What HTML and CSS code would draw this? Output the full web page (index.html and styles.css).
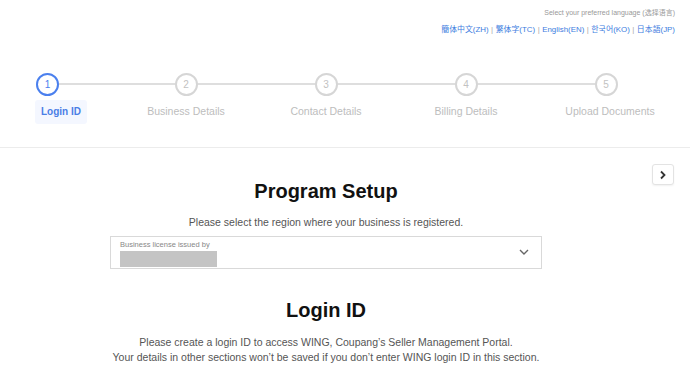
FILE: index.html
```html
<!DOCTYPE html>
<html lang="en">

<head>
    <meta charset="UTF-8">
    <meta name="viewport" content="width=device-width, initial-scale=1.0">
    <title>Seller Signup</title>
    <link rel="stylesheet" href="styles.css">
</head>

<body>
    <header class="lang-bar">
        <div class="lang-label">Select your preferred language (选择语言)</div>
        <div class="lang-links">
            <a href="#">簡体中文(ZH)</a><span class="sep">|</span><a href="#">繁体字(TC)</a><span class="sep">|</span><a href="#">English(EN)</a><span class="sep">|</span><a href="#">한국어(KO)</a><span class="sep">|</span><a href="#">日本語(JP)</a>
        </div>
    </header>

    <nav class="stepper">
        <div class="step step-first active">
            <div class="step-circle">1</div>
            <div class="step-label">Login ID</div>
        </div>
        <div class="step">
            <div class="step-circle">2</div>
            <div class="step-label">Business Details</div>
        </div>
        <div class="step">
            <div class="step-circle">3</div>
            <div class="step-label">Contact Details</div>
        </div>
        <div class="step">
            <div class="step-circle">4</div>
            <div class="step-label">Billing Details</div>
        </div>
        <div class="step step-last">
            <div class="step-circle">5</div>
            <div class="step-label">Upload Documents</div>
        </div>
    </nav>

    <div class="page">
        <main class="content">
            <h1 class="title">Program Setup</h1>
            <p class="subtitle">Please select the region where your business is registered.</p>

            <div class="select-box">
                <div class="select-text">
                    <div class="select-label">Business license issued by</div>
                    <div class="select-value"></div>
                </div>
                <svg class="select-arrow" width="10" height="6" viewBox="0 0 10 6">
                    <path d="M1 1 L5 5 L9 1" fill="none" stroke="#666" stroke-width="1.4" />
                </svg>
            </div>

            <h2 class="title section-title">Login ID</h2>
            <p class="desc">
                Please create a login ID to access WING, Coupang’s Seller Management Portal.<br>
                Your details in other sections won’t be saved if you don’t enter WING login ID in this section.
            </p>
        </main>

        <aside class="side">
            <button class="side-toggle" type="button">
                <svg width="8" height="10" viewBox="0 0 8 10">
                    <path d="M2 1.5 L5.5 5 L2 8.5" fill="none" stroke="#333" stroke-width="1.8" />
                </svg>
            </button>
        </aside>
    </div>
</body>

</html>
```

FILE: styles.css
```css
body {
    margin: 0;
    font-family: "Liberation Sans", Arial, "Noto Sans CJK SC", sans-serif;
    background: #fff;
    color: #222;
}

.lang-bar {
    display: flex;
    flex-direction: column;
    align-items: flex-end;
    gap: 6px;
    padding: 8px 15px 0 0;
}

.lang-label {
    font-size: 7px;
    line-height: 10px;
    color: #999;
}

.lang-links {
    display: flex;
    font-size: 7.9px;
    line-height: 12px;
    color: #3d7de0;
}

.lang-links a {
    color: #3d7de0;
    text-decoration: none;
}

.lang-links .sep {
    color: #aaa;
    margin: 0 2.5px;
}

.stepper {
    position: relative;
    display: flex;
    margin-top: 37px;
    padding: 0 14px 23px 36px;
    border-bottom: 1px solid #ececec;
}

.stepper::before {
    content: "";
    position: absolute;
    top: 10px;
    left: 47px;
    right: 84px;
    height: 2px;
    background: #dedede;
}

.step {
    position: relative;
    width: 140px;
    display: flex;
    flex-direction: column;
    align-items: center;
}

.step-first {
    width: 80px;
    align-items: flex-start;
}

.step-circle {
    width: 19px;
    height: 19px;
    border: 2px solid #d6d6d6;
    border-radius: 50%;
    background: #fff;
    color: #c2c2c2;
    font-size: 10px;
    line-height: 19px;
    text-align: center;
}

.step-label {
    margin-top: 4px;
    height: 24px;
    line-height: 23px;
    font-size: 10.5px;
    color: #bdbdbd;
    white-space: nowrap;
}

.step-last .step-label {
    margin-left: 8px;
}

.step.active .step-circle {
    border-color: #4b80ee;
    color: #4b80ee;
}

.step.active .step-label {
    margin-left: -1px;
    padding: 0 6px;
    background: #f4f7ff;
    border-radius: 3px;
    color: #4a7ee6;
    font-weight: bold;
    font-size: 10px;
}

.page {
    display: flex;
}

.content {
    flex: 1;
    display: flex;
    flex-direction: column;
    align-items: center;
    padding-top: 31px;
}

.title {
    margin: 0;
    font-size: 20px;
    line-height: 24px;
    font-weight: bold;
    color: #111;
}

.subtitle {
    margin: 12px 0 0;
    font-size: 10.5px;
    line-height: 14px;
    color: #555;
}

.select-box {
    box-sizing: border-box;
    width: 432px;
    height: 33px;
    margin-top: 7px;
    padding: 3px 12px 2px 9px;
    border: 1px solid #d9d9d9;
    display: flex;
    align-items: center;
    justify-content: space-between;
}

.select-label {
    font-size: 7.5px;
    line-height: 10px;
    color: #888;
}

.select-value {
    width: 97px;
    height: 16px;
    margin-top: 1px;
    background: #c4c4c4;
}

.select-arrow {
    margin-top: -2px;
}

.section-title {
    margin-top: 29px;
}

.desc {
    margin: 13px 0 0;
    font-size: 10.5px;
    line-height: 15px;
    color: #555;
    text-align: center;
}

.side {
    width: 38px;
    padding-top: 16px;
}

.side-toggle {
    width: 22px;
    height: 21px;
    padding: 0;
    border: 1px solid #e3e3e3;
    border-radius: 3px;
    background: #fff;
    box-shadow: 0 1px 2px rgba(0, 0, 0, 0.06);
    display: flex;
    align-items: center;
    justify-content: center;
}
```
